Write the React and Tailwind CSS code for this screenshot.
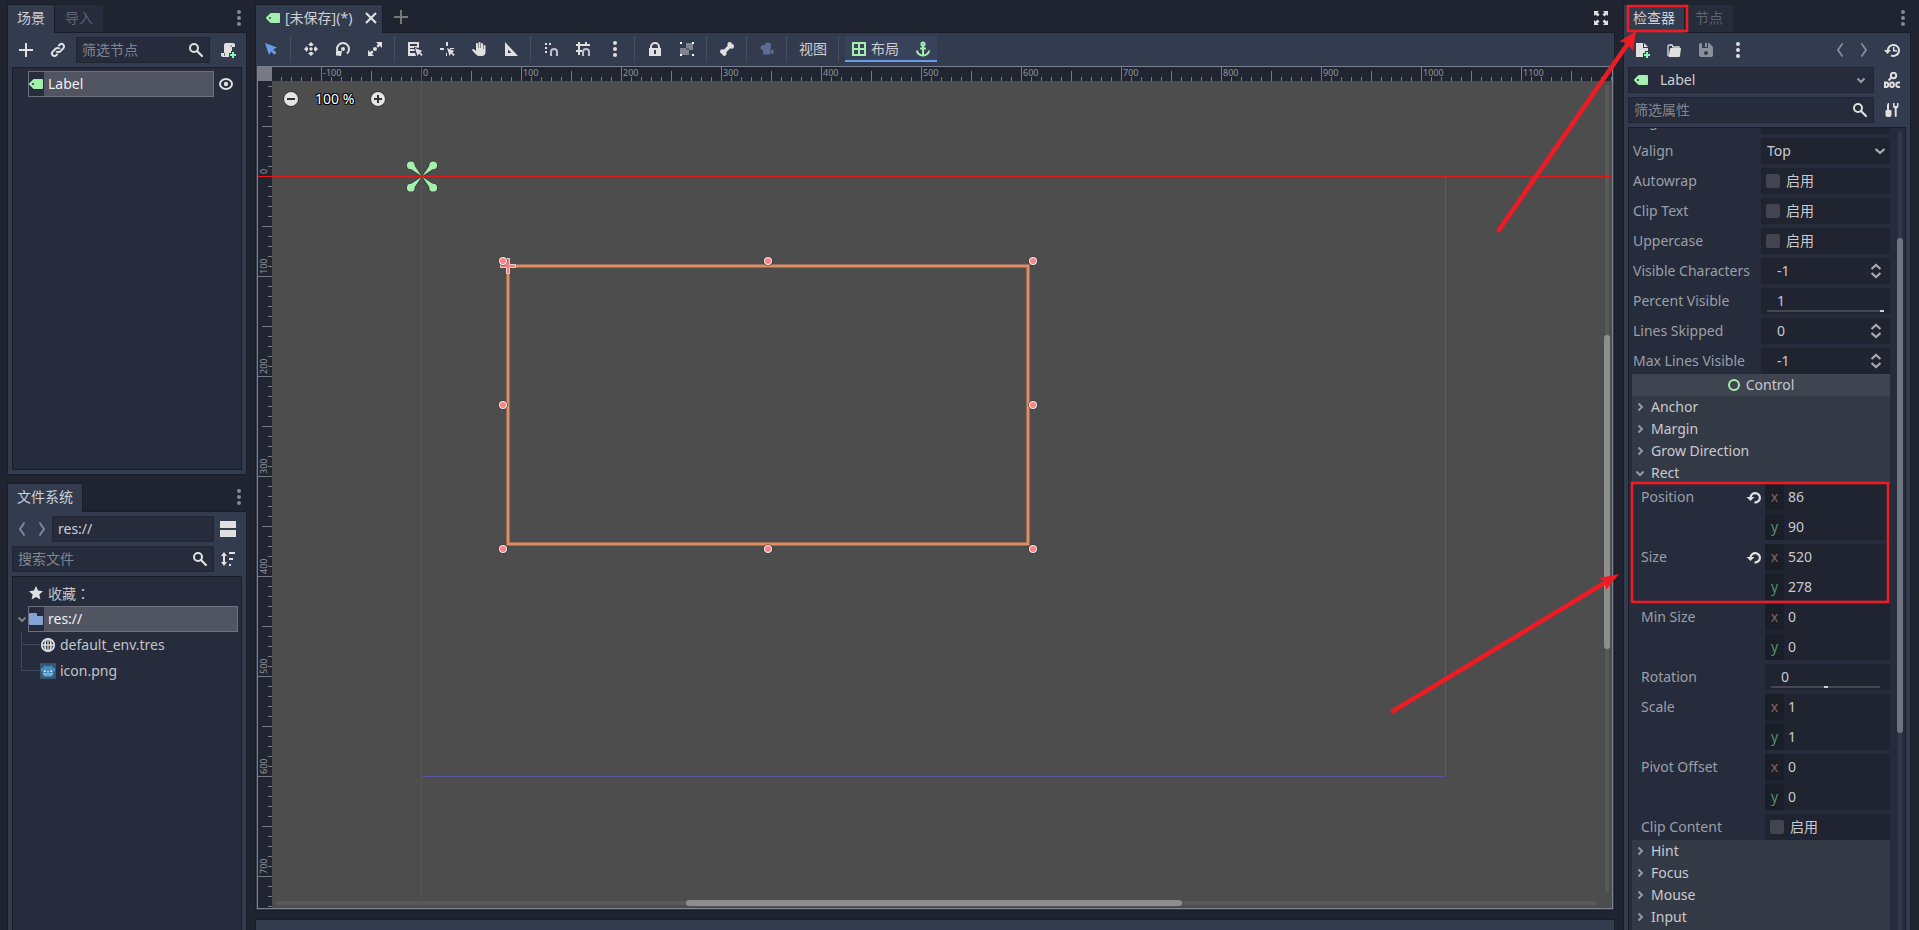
import React from "react";

/* ---------- icons (16 x 16 grid) ---------- */

const Svg = ({ children, className = "size-4 shrink-0 text-[#e0e0e0]" }) => (
  <svg viewBox="0 0 16 16" className={className} fill="currentColor" aria-hidden="true">
    {children}
  </svg>
);

const TagIcon = () => (
  <Svg className="size-4 shrink-0 text-[#a5efac]">
    <path fillRule="evenodd" d="M6 3a1 1 0 0 0-.7.3l-4 4a1 1 0 0 0 0 1.4l4 4A1 1 0 0 0 6 13h8a1 1 0 0 0 1-1V4a1 1 0 0 0-1-1zM5 7a1 1 0 1 1 0 2 1 1 0 0 1 0-2z" />
  </Svg>
);
const AddIcon = ({ className }) => (
  <Svg className={className}>
    <path d="M7 1v6H1v2h6v6h2V9h6V7H9V1z" />
  </Svg>
);
const LinkIcon = () => (
  <Svg>
    <g fill="none" stroke="currentColor" strokeWidth="2" transform="rotate(-45 8 8)">
      <path d="M10 8.500a2.700 2.700 0 0 0-2.500-3H3a2.500 2.500 0 0 0 0 5h2" />
      <path d="M6 7.500a2.700 2.700 0 0 0 2.500 3H13a2.500 2.500 0 0 0 0-5h-2" />
    </g>
  </Svg>
);
const SearchIcon = () => (
  <Svg>
    <circle cx="6" cy="6" r="4" fill="none" stroke="currentColor" strokeWidth="2" />
    <path d="M9 9l5 5" stroke="currentColor" strokeWidth="2.200" strokeLinecap="round" />
  </Svg>
);
const GreenPlus = () => <path fill="#84ffb1" d="M12 10v2h-2v2h2v2h2v-2h2v-2h-2v-2z" />;
const ScriptAddIcon = () => (
  <Svg>
    <path d="M6 1a2 2 0 0 0-2 2v8H1v2a2 2 0 0 0 2 2h6v-4h2V9h1V5h3V3a2 2 0 0 0-2-2z" />
    <path d="M11 5V3M4.500 11v3" stroke="#333b4f" strokeWidth="0.700" />
    <GreenPlus />
  </Svg>
);
const EyeIcon = () => (
  <Svg>
    <ellipse cx="8" cy="8" rx="6" ry="5" fill="none" stroke="currentColor" strokeWidth="2" />
    <circle cx="8" cy="8" r="2.200" />
  </Svg>
);
const DotsIcon = ({ className }) => (
  <Svg className={className}>
    <circle cx="8" cy="2" r="2" />
    <circle cx="8" cy="8" r="2" />
    <circle cx="8" cy="14" r="2" />
  </Svg>
);
const CloseIcon = () => (
  <Svg>
    <path d="M3 3l10 10M13 3L3 13" stroke="currentColor" strokeWidth="2.200" />
  </Svg>
);
const BackIcon = () => (
  <Svg className="size-4 shrink-0 text-[#888d98]">
    <path d="M10.500 1.500L6 8l4.500 6.500" fill="none" stroke="currentColor" strokeWidth="1.800" />
  </Svg>
);
const ForwardIcon = () => (
  <Svg className="size-4 shrink-0 text-[#888d98]">
    <path d="M5.500 1.500L10 8l-4.500 6.500" fill="none" stroke="currentColor" strokeWidth="1.800" />
  </Svg>
);
const SplitIcon = () => (
  <Svg>
    <path d="M0 0h16v7H0zM0 9h16v7H0z" />
  </Svg>
);
const SortIcon = () => (
  <Svg>
    <path d="M4 1L1 5h2v6H1l3 4 3-4H5V5h2zM9 1h6v2H9zM9 7h4v2H9zM9 13h2v2H9z" />
  </Svg>
);
const StarIcon = () => (
  <Svg>
    <path d="M8 1l2 4.600 5 .6-3.700 3.200 1.100 5L8 12l-4.400 2.400 1.100-5L1 6.200l5-.6z" />
  </Svg>
);
const FolderIcon = () => (
  <Svg className="size-4 shrink-0 text-[#84a2d6]">
    <path d="M2 2a1 1 0 0 0-1 1v10a1 1 0 0 0 1 1h12a1 1 0 0 0 1-1V6a1 1 0 0 0-1-1H9V3a1 1 0 0 0-1-1z" />
  </Svg>
);
const GlobeIcon = () => (
  <Svg>
    <g fill="none" stroke="currentColor" strokeWidth="1.800">
      <circle cx="8" cy="8" r="6.200" />
      <ellipse cx="8" cy="8" rx="3" ry="6.200" />
      <path d="M8 2v12M2 8h12" strokeWidth="1.300" />
    </g>
  </Svg>
);
const PictureIcon = () => (
  <Svg>
    <rect width="16" height="16" rx="1" fill="#355570" />
    <path fill="#478cbf" d="M3 4l2-2 1 1.300h4L11 2l2 2-.5 1H15v3l-1.500 1v3.500L11 14H5l-2.500-1.500V9L1 8V5h2.500z" />
    <path d="M4 7.500h1.500V9H4zM10.500 7.500H12V9h-1.500zM7.500 8h1v1.500h-1z" fill="#fff" />
    <path d="M3 10.500h2V12h1.500v-1h3v1H11v-1.500h2" fill="none" stroke="#dcebf6" strokeWidth="0.600" />
  </Svg>
);
const ChevronDown = ({ className = "size-4 shrink-0 text-[#888d98]" }) => (
  <Svg className={className}>
    <path d="M4.500 6.500L8 10l3.500-3.500" fill="none" stroke="currentColor" strokeWidth="2" />
  </Svg>
);
const ChevronRight = () => (
  <Svg className="size-4 shrink-0 text-[#9699a0]">
    <path d="M6.500 4.500L10 8l-3.500 3.500" fill="none" stroke="currentColor" strokeWidth="2" />
  </Svg>
);
const cursor = "M8 7l2.500 8 1.500-2.500 2.500 2.500 1.200-1.200-2.500-2.500L15.500 10z";
const SelectIcon = () => (
  <Svg className="size-4 shrink-0 text-[#699ce8]">
    <path d="M2 2l4 12 2.200-3.600 3.200 3.400 2-2-3.300-3.200L14 6.500z" />
  </Svg>
);
const MoveIcon = () => (
  <Svg>
    <path d="M8 1L5 4h1.500v1h3V4H11zM8 15l3-3H9.500v-1h-3v1H5zM1 8l3 3V9.500h1v-3H4V5zM15 8l-3-3v1.500h-1v3h1V11z" />
    <circle cx="8" cy="8" r="1.700" />
  </Svg>
);
const RotateIcon = () => (
  <Svg>
    <path d="M4 12.500A6 6 0 1 1 12 12.500" fill="none" stroke="currentColor" strokeWidth="2" />
    <path d="M1 10l6 0-1 5-5-.5z" />
    <circle cx="8" cy="8" r="2" />
  </Svg>
);
const ScaleIcon = () => (
  <Svg>
    <path d="M9 1h6v6l-2-2-2 1.500L9.500 5 11 3zM7 15H1V9l2 2 2-1.500L6.500 11 5 13z" />
    <circle cx="8" cy="8" r="2" />
  </Svg>
);
const ListSelectIcon = () => (
  <Svg>
    <path fillRule="evenodd" d="M1 1h11v6L7 6v1H3v1h4l1 2H3v2h5l1 3H1zM3 3v2h7V3z" />
    <path d={cursor} />
  </Svg>
);
const PivotIcon = () => (
  <Svg>
    <path d="M7 1h2v4H7zM1 7h4v2H1zM7 12h1v3H7zM11 7h4v1h-4z" />
    <path d={cursor} />
  </Svg>
);
const HandIcon = () => (
  <Svg>
    <path d="M5 3a1 1 0 0 1 2 0v4h.5V2a1 1 0 0 1 2 0v5h.5V3a1 1 0 0 1 2 0v5h.5V5a1 1 0 0 1 2 0v6a4 4 0 0 1-4 4H8a4 4 0 0 1-3.300-1.800L1.300 9.500a1 1 0 0 1 1.500-1.300L5 10z" />
  </Svg>
);
const RulerIcon = () => (
  <Svg>
    <path fillRule="evenodd" d="M2 1v14h13zM5 8.500l3.500 3.500H5z" />
  </Svg>
);
const magnet = "M8 15v-4a3 3 0 0 1 6 0v4";
const SmartSnapIcon = () => (
  <Svg>
    <path d="M2 2h2v2H2zM6 2h2v2H6zM2 6h2v2H2zM2 10h2v2H2z" />
    <path d={magnet} fill="none" stroke="#bfc2c8" strokeWidth="2" />
  </Svg>
);
const GridSnapIcon = () => (
  <Svg>
    <path d="M3 1h2v2h5V1h2v2h3v2H5v4h2v2H5v3H3v-3H1V9h2V5H1V3h2z" />
    <path d={magnet} fill="none" stroke="#bfc2c8" strokeWidth="2" />
  </Svg>
);
const LockIcon = () => (
  <Svg>
    <path d="M4 8V6a4 4 0 0 1 8 0v2" fill="none" stroke="currentColor" strokeWidth="2" />
    <path fillRule="evenodd" d="M2 7h12v8H2zM7 9v4h2V9z" />
  </Svg>
);
const GroupIcon = () => (
  <Svg>
    <path fill="#7e8491" d="M7 2h7v7h-4v5H1V7h6z" />
    <path fill="#5c6271" d="M7 7h3v2H7z" />
    <path fill="#ffffff" d="M1 1h2v2H1zM13 1h2v2h-2zM1 13h2v2H1zM13 13h2v2h-2z" />
  </Svg>
);
const BoneIcon = () => (
  <Svg>
    <path d="M4.500 11.500l7-7" stroke="currentColor" strokeWidth="3.600" />
    <circle cx="10.700" cy="3.400" r="2.300" />
    <circle cx="12.700" cy="5.400" r="2.300" />
    <circle cx="3.300" cy="10.600" r="2.300" />
    <circle cx="5.300" cy="12.600" r="2.300" />
  </Svg>
);
const CameraIcon = () => (
  <Svg className="size-4 shrink-0 text-[#5e6b91]">
    <circle cx="4" cy="6.500" r="2.500" />
    <circle cx="8.800" cy="4.900" r="3.300" />
    <path d="M4 7h7.500v5.500a1 1 0 0 1-1 1H5a1 1 0 0 1-1-1zM12 9.500l2.500-1.500v5.500L12 12z" />
  </Svg>
);
const LayoutIcon = () => (
  <Svg className="size-4 shrink-0 text-[#a5efac]">
    <path fillRule="evenodd" d="M1 1h14v14H1zM3 3v4h4V3zM9 3v4h4V3zM3 9v4h4V9zM9 9v4h4V9z" />
  </Svg>
);
const AnchorIcon = () => (
  <Svg className="size-4 shrink-0 text-[#a5efac]">
    <g fill="none" stroke="currentColor" strokeWidth="2">
      <circle cx="8" cy="3" r="1.600" />
      <path d="M8 5v9M5 7.500h6M2 9.500a6 5 0 0 0 12 0" />
    </g>
  </Svg>
);
const ExpandIcon = () => (
  <Svg>
    <path d="M1 1h5L4.500 2.500l2 2-2 2-2-2L1 6zM15 1v5l-1.500-1.500-2 2-2-2 2-2L10 1zM1 15v-5l1.500 1.500 2-2 2 2-2 2L6 15zM15 15h-5l1.500-1.500-2-2 2-2 2 2L15 10z" />
  </Svg>
);
const NewFileIcon = () => (
  <Svg>
    <path d="M2 1h7v5h5v3h-3v2H9v4H2zM10 1l4 4h-4z" />
    <GreenPlus />
  </Svg>
);
const OpenIcon = () => (
  <Svg>
    <path d="M2 14V4a2 2 0 0 1 1-1h3l1 2h6v2" fill="none" stroke="currentColor" strokeWidth="1.300" />
    <path d="M5 6h10l-1 8a1 1 0 0 1-1 1H2.500L4 7a1 1 0 0 1 1-1z" />
  </Svg>
);
const SaveIcon = () => (
  <Svg className="size-4 shrink-0 text-[#8a8f9b]">
    <path fillRule="evenodd" d="M3 1a2 2 0 0 0-2 2v10a2 2 0 0 0 2 2h10a2 2 0 0 0 2-2V5l-4-4h-1v5H4V1zM8 9a2 2 0 1 1 0 4 2 2 0 0 1 0-4zM7 1h2v4H7z" />
  </Svg>
);
const HistoryIcon = () => (
  <Svg>
    <path d="M4 9a5.500 5.500 0 1 1 3 4.300" fill="none" stroke="currentColor" strokeWidth="2" />
    <path d="M0 8h7l-3.500 4zM9 5h1.500v3H13v1.500H9z" />
  </Svg>
);
const DocIcon = () => (
  <Svg>
    <g fill="none" stroke="currentColor" strokeWidth="2">
      <circle cx="9.500" cy="3.500" r="2.700" />
      <path d="M7.500 5.500L4.500 8.500" />
      <path d="M1 10.500h1a2.200 2.200 0 0 1 0 4.500H1z" />
      <rect x="6.200" y="10.500" width="3.600" height="4.500" rx="1.400" />
      <path d="M16 10.500h-1.500a2.200 2.200 0 0 0 0 4.500H16" />
    </g>
  </Svg>
);
const ToolsIcon = () => (
  <Svg>
    <path d="M4 1h1v7h1.500a1 1 0 0 1 1 1v4a2 2 0 0 1-2 2h-2a2 2 0 0 1-2-2V9a1 1 0 0 1 1-1H3V3z" />
    <path d="M9 1v3a2.600 2.600 0 0 0 1.700 2.500V14a1 1 0 0 0 2 0V6.500A2.600 2.600 0 0 0 14.500 4V1h-1.600v3h-2.300V1z" />
  </Svg>
);
const RevertIcon = () => (
  <Svg>
    <path d="M4.500 8.500a4.700 4.700 0 1 1 4 4.900" fill="none" stroke="currentColor" strokeWidth="2.200" />
    <path d="M0.500 8h8L4.500 12z" />
  </Svg>
);
const UpDownIcon = () => (
  <Svg className="size-4 shrink-0 text-[#a9abb0]">
    <path d="M3.500 6L8 2l4.500 4M3.500 10L8 14l4.500-4" fill="none" stroke="currentColor" strokeWidth="2.200" />
  </Svg>
);

/* ---------- shared pieces ---------- */

const IconButton = ({ label, children, className = "w-7" }) => (
  <button type="button" aria-label={label} className={`flex h-[26px] shrink-0 items-center justify-center ${className}`}>
    {children}
  </button>
);

const Tab = ({ active, children }) =>
  active ? (
    <button type="button" className="relative z-10 -mb-px h-[29px] border border-b-0 border-[#191d27] bg-[#333b4f] px-[9px] pb-[2px] text-[#cdcfd2]">
      {children}
    </button>
  ) : (
    <button type="button" className="mt-px h-[27px] bg-[#262c3b] px-[10px] pb-[1px] text-[#5f6473]">
      {children}
    </button>
  );

const TabRow = ({ children }) => (
  <div className="flex h-7 shrink-0 items-start">
    {children}
    <button type="button" aria-label="选项" className="ml-auto flex h-7 w-4 items-center justify-center">
      <DotsIcon className="size-4 text-[#868a93]" />
    </button>
  </div>
);

const SearchBox = ({ id, placeholder }) => (
  <label htmlFor={id} className="flex h-[26px] min-w-0 flex-1 items-center border border-[#202531] bg-[#262c3b] px-[5px]">
    <input id={id} type="text" aria-label={placeholder} placeholder={placeholder} className="w-full min-w-0 bg-transparent text-[#cdcfd2] outline-none placeholder:text-[#82868f]" />
    <SearchIcon />
  </label>
);

/* ---------- left docks ---------- */

const TreeSelected = ({ icon, children }) => (
  <div className="flex h-[26px] flex-1 items-center border border-[#6d707d] bg-[#515561] text-[#f0f0f1]">
    <span className="flex h-full w-[15px] items-center bg-[#262c3b]">
      <span className="-ml-px flex">{icon}</span>
    </span>
    <span className="pl-1">{children}</span>
  </div>
);

const SceneDock = () => (
  <section className="flex min-h-0 flex-[471_1_0px] flex-col">
    <TabRow>
      <Tab active>场景</Tab>
      <Tab>导入</Tab>
    </TabRow>
    <div className="flex min-h-0 flex-1 flex-col gap-1 border border-[#191d27] bg-[#333b4f] p-1">
      <div className="flex gap-1">
        <IconButton label="添加节点"><AddIcon /></IconButton>
        <IconButton label="实例化"><LinkIcon /></IconButton>
        <SearchBox id="filter-nodes" placeholder="筛选节点" />
        <IconButton label="附加脚本"><ScriptAddIcon /></IconButton>
      </div>
      <div className="min-h-0 flex-1 border border-[#191d27] bg-[#262c3b] p-[3px]">
        <div className="flex items-center pl-3">
          <TreeSelected icon={<TagIcon />}>Label</TreeSelected>
          <button type="button" aria-label="可见" className="flex h-[26px] w-6 items-center justify-center">
            <EyeIcon />
          </button>
        </div>
      </div>
    </div>
  </section>
);

const FileDock = () => (
  <section className="flex min-h-0 flex-[447_1_0px] flex-col">
    <TabRow>
      <Tab active>文件系统</Tab>
    </TabRow>
    <div className="flex min-h-0 flex-1 flex-col gap-1 border border-b-0 border-[#191d27] bg-[#333b4f] px-1 pt-1">
      <div className="flex">
        <IconButton label="后退" className="w-5"><BackIcon /></IconButton>
        <IconButton label="前进" className="w-5"><ForwardIcon /></IconButton>
        <input type="text" aria-label="路径" defaultValue="res://" className="h-[26px] min-w-0 flex-1 border border-[#202531] bg-[#262c3b] px-[5px] pb-[1px] text-[#cdcfd2] outline-none" />
        <IconButton label="切换分栏"><SplitIcon /></IconButton>
      </div>
      <div className="flex">
        <SearchBox id="search-files" placeholder="搜索文件" />
        <IconButton label="排序"><SortIcon /></IconButton>
      </div>
      <div className="min-h-0 flex-1 border border-b-0 border-[#191d27] bg-[#262c3b] p-[3px] text-[#c3c5ca]">
        <div className="flex h-[26px] items-center gap-1 pl-3">
          <StarIcon />
          <span>
            收藏<span className="font-['Noto_Sans_CJK_TC',sans-serif]" lang="zh-Hant">：</span>
          </span>
        </div>
        <div className="flex items-center">
          <span className="flex w-3 justify-center"><ChevronDown className="size-4 shrink-0 text-[#7c808b]" /></span>
          <TreeSelected icon={<FolderIcon />}>res://</TreeSelected>
        </div>
        <div className="ml-[5px]">
          {[
            ["default_env.tres", <GlobeIcon key="g" />],
            ["icon.png", <PictureIcon key="p" />],
          ].map(([name, icon], i) => (
            <div key={name} className="flex h-[26px] items-center">
              <span className="flex h-full w-[19px] flex-col">
                <span className="h-[13px] border-b border-l border-[#41475a]" />
                <span className={i === 0 ? "h-[13px] border-l border-[#41475a]" : "h-[13px]"} />
              </span>
              {icon}
              <span className="pl-1">{name}</span>
            </div>
          ))}
        </div>
      </div>
    </div>
  </section>
);

/* ---------- canvas editor ---------- */

const Separator = () => <span className="flex h-[26px] w-1 shrink-0 pl-px"><span className="w-px bg-[#474e60]" /></span>;

const Toolbar = () => (
  <div className="flex gap-1 px-px pt-[3px] pb-1 text-[#cdcfd2]">
    <IconButton label="选择"><SelectIcon /></IconButton>
    <Separator />
    <IconButton label="移动"><MoveIcon /></IconButton>
    <IconButton label="旋转"><RotateIcon /></IconButton>
    <IconButton label="缩放"><ScaleIcon /></IconButton>
    <Separator />
    <IconButton label="列表选择"><ListSelectIcon /></IconButton>
    <IconButton label="轴心"><PivotIcon /></IconButton>
    <IconButton label="平移"><HandIcon /></IconButton>
    <IconButton label="标尺"><RulerIcon /></IconButton>
    <Separator />
    <IconButton label="智能吸附"><SmartSnapIcon /></IconButton>
    <IconButton label="栅格吸附"><GridSnapIcon /></IconButton>
    <IconButton label="吸附选项"><DotsIcon /></IconButton>
    <Separator />
    <IconButton label="锁定"><LockIcon /></IconButton>
    <IconButton label="编组"><GroupIcon /></IconButton>
    <Separator />
    <IconButton label="骨骼"><BoneIcon /></IconButton>
    <Separator />
    <IconButton label="摄像机"><CameraIcon /></IconButton>
    <Separator />
    <button type="button" className="h-[26px] px-[6px]">视图</button>
    <Separator />
    <div className="flex h-[26px] gap-1 border-b-2 border-[#699ce8] bg-[#38425a]">
      <button type="button" className="flex h-[26px] items-center gap-1 px-[6px]">
        <LayoutIcon />
        布局
      </button>
      <IconButton label="锚点"><AnchorIcon /></IconButton>
    </div>
  </div>
);

const range = (from, to) => Array.from({ length: to - from + 1 }, (_, i) => from + i);
const tickSize = (k) => (k % 10 === 0 ? 14 : k % 5 === 0 ? 10 : 4);

const TopRuler = () => (
  <svg className="h-[14px] w-full bg-[#202531]" shapeRendering="crispEdges">
    {range(-14, 300).map((k) => (
      <rect key={k} x={149 + k * 10} y={14 - tickSize(k)} width="1" height={tickSize(k)} fill="#767a87" />
    ))}
    {range(-1, 11).map((k) => (
      <text key={k} x={151 + k * 100} y="9" fontSize="9" fill="#9095a0">{k * 100}</text>
    ))}
  </svg>
);

const SideRuler = () => (
  <svg className="h-full w-[14px] bg-[#202531]" shapeRendering="crispEdges">
    {range(-9, 200).map((k) => (
      <rect key={k} x={14 - tickSize(k)} y={95 + k * 10} width={tickSize(k)} height="1" fill="#767a87" />
    ))}
    {range(0, 7).map((k) => (
      <text key={k} transform={`translate(9 ${93 + k * 100}) rotate(-90)`} fontSize="9" fill="#9095a0">{k * 100}</text>
    ))}
  </svg>
);

const handles = [
  [231, 180], [496, 180], [761, 180],
  [231, 324], [761, 324],
  [231, 468], [496, 468], [761, 468],
];

const AnchorPin = () => (
  <>
    <path d="M0.500 0.500L7.600 11L11 7.600Z" />
    <circle cx="11.200" cy="11.200" r="3.900" />
  </>
);

const CanvasDrawing = () => (
  <svg className="absolute inset-0 size-full" aria-hidden="true">
    <rect x="149.500" y="95.500" width="1024" height="600" fill="none" stroke="#5a549c" />
    {[[-1, -1], [1, -1], [-1, 1], [1, 1]].map(([sx, sy]) => (
      <g key={`${sx}${sy}`} transform={`translate(150 95.500) scale(${sx} ${sy})`}>
        <g fill="#333" stroke="#363a36" strokeWidth="1.600"><AnchorPin /></g>
        <g fill="#a5efac"><AnchorPin /></g>
      </g>
    ))}
    <rect x="236" y="185" width="520" height="278" fill="none" stroke="#e58c5f" strokeOpacity="0.500" strokeWidth="4" />
    <rect x="236" y="185" width="520" height="278" fill="none" stroke="#e28c60" strokeWidth="2" />
    <path d="M234.500 177.500h3v6h6v3h-6v6h-3v-6h-6v-3h6z" fill="#ff7b7b" stroke="#e0d4d0" />
    {handles.map(([x, y]) => (
      <g key={`${x}-${y}`}>
        <circle cx={x} cy={y} r="4.800" fill="#333" fillOpacity="0.700" />
        <circle cx={x} cy={y} r="4" fill="#f2eeee" />
        <circle cx={x} cy={y} r="3" fill="#ff8080" />
      </g>
    ))}
  </svg>
);

const ZoomIcon = ({ plus }) => (
  <svg viewBox="0 0 16 16" className="size-4">
    <circle cx="8" cy="8" r="7.700" fill="#303030" />
    <circle cx="8" cy="8" r="7" fill="#e4e4e4" />
    <path d={plus ? "M4 7h3V4h2v3h3v2H9v3H7V9H4z" : "M4 7h8v2H4z"} fill="#333" />
  </svg>
);

const Viewport = () => (
  <div className="relative mx-px mb-px grid min-h-0 flex-1 grid-cols-[14px_minmax(0,1fr)] grid-rows-[14px_minmax(0,1fr)] overflow-hidden border border-[#7a8292]">
    <div className="bg-[#787b84]" />
    <TopRuler />
    <SideRuler />
    <div className="relative overflow-hidden bg-[#4d4d4d]">
      <CanvasDrawing />
      <div className="relative flex items-center gap-[10px] pt-[5px] pl-[5px]">
        <IconButton label="缩小"><ZoomIcon /></IconButton>
        <button type="button" className="h-[26px] text-white [text-shadow:1px_1px_0_#000,-1px_-1px_0_#000,1px_-1px_0_#000,-1px_1px_0_#000]">100 %</button>
        <IconButton label="放大"><ZoomIcon plus /></IconButton>
      </div>
      <div className="absolute top-1 right-[3px] bottom-4 w-1 rounded-full bg-[#595959]" />
      <div className="absolute top-[254px] right-[2px] h-[314px] w-[6px] rounded-full bg-[#8e8e8e]" />
      <div className="absolute right-[15px] bottom-[3px] left-1 h-1 rounded-full bg-[#595959]" />
      <div className="absolute bottom-[2px] left-[414px] h-[6px] w-[496px] rounded-full bg-[#8e8e8e]" />
    </div>
    <div className="absolute inset-y-0 left-[163px] w-px bg-[#d81e1e]" />
    <div className="absolute inset-x-0 top-[109px] h-px bg-[#e01a1a]" />
  </div>
);

const Editor = () => (
  <main className="flex min-h-0 min-w-0 flex-1 flex-col">
    <div className="flex h-7 shrink-0 items-start">
      <div className="relative z-10 -mb-px flex h-[29px] items-center gap-1 border border-b-0 border-[#191d27] bg-[#333b4f] pr-[3px] pb-[2px] pl-[9px] text-[#cdcfd2]">
        <TagIcon />
        <button type="button">[未保存](*)</button>
        <button type="button" aria-label="关闭" className="ml-[7px] flex"><CloseIcon /></button>
      </div>
      <button type="button" aria-label="新建场景" className="ml-[10px] flex h-[26px] items-center">
        <AddIcon className="size-4 text-[#77787a]" />
      </button>
      <button type="button" aria-label="专注模式" className="mr-[6px] ml-auto flex h-7 items-center">
        <ExpandIcon />
      </button>
    </div>
    <div className="flex min-h-0 flex-1 flex-col border border-[#191d27] bg-[#333b4f]">
      <Toolbar />
      <Viewport />
    </div>
    <div className="mt-2 h-[11px] shrink-0 border border-b-0 border-[#191d27] bg-[#333b4f]" />
  </main>
);

/* ---------- inspector ---------- */

const Prop = ({ label, id, sub, revert, tall, children }) => (
  <div className={sub ? "grid grid-cols-[133px_minmax(0,1fr)]" : "grid grid-cols-[129px_minmax(0,1fr)]"}>
    <div className={sub ? "flex h-[26px] items-center justify-between pr-[3px] pl-[9px]" : "flex h-[26px] items-center pl-px"}>
      <label htmlFor={id} className="whitespace-nowrap text-[#9b9fa7]">{label}</label>
      {revert && <button type="button" aria-label={`还原 ${label}`} className="flex"><RevertIcon /></button>}
    </div>
    <div className={tall ? "flex flex-col gap-1 bg-[#202430]" : "flex h-[26px] bg-[#202430]"}>{children}</div>
  </div>
);

const CheckProp = ({ label, id, sub }) => (
  <Prop label={label} id={id} sub={sub}>
    <span className="flex items-center gap-[6px] pl-[5px]">
      <input id={id} type="checkbox" className="size-[14px] appearance-none rounded-xs bg-[#42454f] checked:bg-[#699ce8]" />
      <span>启用</span>
    </span>
  </Prop>
);

const SpinProp = ({ label, id, value }) => (
  <Prop label={label} id={id}>
    <input id={id} type="text" defaultValue={value} className="w-full min-w-0 bg-transparent pl-4 outline-none" />
    <button type="button" aria-label={`调整 ${label}`} className="flex items-center pr-[6px]"><UpDownIcon /></button>
  </Prop>
);

const SliderProp = ({ label, id, value, sub, min }) => (
  <Prop label={label} id={id} sub={sub}>
    <div className="flex w-full flex-col">
      <input id={id} type="text" defaultValue={value} className="h-[22px] w-full min-w-0 bg-transparent pt-[3px] pl-4 outline-none" />
      <input
        type="range"
        aria-label={`${label} 滑块`}
        min={min}
        max="1"
        defaultValue={value}
        className={`${sub ? "mr-[10px]" : "mr-[6px]"} ml-[6px] h-[2px] appearance-none bg-[#44474f] [&::-webkit-slider-thumb]:h-[2px] [&::-webkit-slider-thumb]:w-1 [&::-webkit-slider-thumb]:appearance-none [&::-webkit-slider-thumb]:bg-[#cdcfd2]`}
      />
    </div>
  </Prop>
);

const VectorProp = ({ label, id, x, y, revert }) => (
  <Prop label={label} id={`${id}-x`} sub revert={revert} tall>
    {[["x", x, "text-[#8a655e]"], ["y", y, "text-[#549068]"]].map(([axis, v, tone]) => (
      <div key={axis} className="flex h-[26px]">
        <label htmlFor={`${id}-${axis}`} className={`flex w-[19px] shrink-0 items-center justify-center bg-[#1a1e28] ${tone}`}>{axis}</label>
        <input id={`${id}-${axis}`} type="text" defaultValue={v} className="w-full min-w-0 bg-transparent pl-1 outline-none" />
      </div>
    ))}
  </Prop>
);

const Section = ({ title, open }) => (
  <button type="button" className="flex h-[22px] w-full items-center gap-[3px] bg-[#343946] text-left">
    {open ? <ChevronDown className="size-4 shrink-0 text-[#9699a0]" /> : <ChevronRight />}
    <span>{title}</span>
  </button>
);

const Properties = () => (
  <div className="-mt-5 flex min-w-0 flex-1 flex-col text-[#c8cacf]">
    <div className="flex flex-col gap-1">
      <Prop label="Align" id="align">
        <select id="align" aria-label="Align" defaultValue="" className="w-full appearance-none bg-transparent px-[6px] outline-none"><option value="" /></select>
      </Prop>
      <Prop label="Valign" id="valign">
        <div className="flex w-full items-center pr-[2px]">
          <select id="valign" defaultValue="Top" className="h-[26px] min-w-0 flex-1 appearance-none bg-transparent pl-[6px] outline-none">
            <option>Top</option>
            <option>Center</option>
            <option>Bottom</option>
          </select>
          <Svg className="pointer-events-none size-4 text-[#b0b2b7]">
            <path d="M3.500 6L8 10l4.500-4" fill="none" stroke="currentColor" strokeWidth="2" />
          </Svg>
        </div>
      </Prop>
      <CheckProp label="Autowrap" id="autowrap" />
      <CheckProp label="Clip Text" id="clip-text" />
      <CheckProp label="Uppercase" id="uppercase" />
      <SpinProp label="Visible Characters" id="visible-characters" value="-1" />
      <SliderProp label="Percent Visible" id="percent-visible" value="1" min="0" />
      <SpinProp label="Lines Skipped" id="lines-skipped" value="0" />
      <SpinProp label="Max Lines Visible" id="max-lines" value="-1" />
    </div>
    <h2 className="flex h-[22px] shrink-0 items-center justify-center gap-1 bg-[#3f4451] pr-[2px]">
      <Svg className="size-4 text-[#a5efac]">
        <circle cx="8" cy="8" r="5" fill="none" stroke="currentColor" strokeWidth="2" />
      </Svg>
      Control
    </h2>
    <Section title="Anchor" />
    <Section title="Margin" />
    <Section title="Grow Direction" />
    <Section title="Rect" open />
    <div className="flex flex-col gap-1">
      <VectorProp label="Position" id="position" x="86" y="90" revert />
      <VectorProp label="Size" id="size" x="520" y="278" revert />
      <VectorProp label="Min Size" id="min-size" x="0" y="0" />
      <SliderProp label="Rotation" id="rotation" value="0" min="-1" sub />
      <VectorProp label="Scale" id="scale" x="1" y="1" />
      <VectorProp label="Pivot Offset" id="pivot" x="0" y="0" />
      <CheckProp label="Clip Content" id="clip-content" sub />
    </div>
    <Section title="Hint" />
    <Section title="Focus" />
    <Section title="Mouse" />
    <Section title="Input" />
    <div className="h-[22px] shrink-0 bg-[#343946]" />
  </div>
);

const Inspector = () => (
  <aside className="flex min-h-0 w-72 shrink-0 flex-col">
    <TabRow>
      <Tab active>检查器</Tab>
      <Tab>节点</Tab>
    </TabRow>
    <div className="flex min-h-0 flex-1 flex-col gap-1 border border-b-0 border-[#191d27] bg-[#333b4f] px-1 pt-1">
      <div className="flex gap-1">
        <IconButton label="新建资源"><NewFileIcon /></IconButton>
        <IconButton label="打开资源"><OpenIcon /></IconButton>
        <IconButton label="保存资源"><SaveIcon /></IconButton>
        <IconButton label="更多"><DotsIcon /></IconButton>
        <IconButton label="上一个" className="ml-auto w-5"><BackIcon /></IconButton>
        <IconButton label="下一个" className="w-5"><ForwardIcon /></IconButton>
        <IconButton label="历史"><HistoryIcon /></IconButton>
      </div>
      <div className="flex gap-1">
        <button type="button" className="flex h-[26px] flex-1 items-center border border-[#202531] bg-[#262c3b] px-1 text-left text-[#cdcfd2]">
          <TagIcon />
          <span className="flex-1 pl-[11px]">Label</span>
          <ChevronDown className="size-4 shrink-0 text-[#9b9ea6]" />
        </button>
        <IconButton label="文档"><DocIcon /></IconButton>
      </div>
      <div className="flex gap-1">
        <SearchBox id="filter-props" placeholder="筛选属性" />
        <IconButton label="属性工具"><ToolsIcon /></IconButton>
      </div>
      <div className="relative flex min-h-0 flex-1 items-start overflow-hidden border border-b-0 border-[#191d27] bg-[#262c3b] pr-[15px] pl-[3px]">
        <Properties />
        <div className="absolute top-[3px] right-[3px] bottom-0 w-1 rounded-t-full bg-[#343947]" />
        <div className="absolute top-[110px] right-[2px] h-[495px] w-[6px] rounded-full bg-[#6f727f]" />
      </div>
    </div>
  </aside>
);

/* ---------- callout marks drawn over the inspector ---------- */

const Callouts = () => (
  <svg viewBox="1359 0 560 760" className="pointer-events-none absolute top-0 right-0 z-20 h-[760px] w-[560px]" aria-hidden="true">
    <g fill="none" stroke="#ed1c24" strokeWidth="2.600">
      <rect x="1628" y="6" width="59" height="25" />
      <rect x="1632" y="483" width="256" height="119" />
    </g>
    <g stroke="#ed1c24" strokeWidth="4.600" strokeLinecap="round">
      <path d="M1499 230L1629 42" />
      <path d="M1393 711L1606 582" />
    </g>
    <g fill="#ed1c24">
      <path d="M1636 31L1619.500 41.500L1627 43L1633 51Z" />
      <path d="M1619 574L1599 578L1605 582L1606 590Z" />
    </g>
  </svg>
);

export default function App() {
  return (
    <div className="relative flex h-screen gap-2 overflow-hidden bg-[#202430] pt-1 pr-2 pl-[7px] font-['Noto_Sans','Noto_Sans_CJK_SC',sans-serif] text-sm leading-5">
      <div className="flex min-h-0 w-60 shrink-0 flex-col gap-2">
        <SceneDock />
        <FileDock />
      </div>
      <Editor />
      <Inspector />
      <Callouts />
    </div>
  );
}
